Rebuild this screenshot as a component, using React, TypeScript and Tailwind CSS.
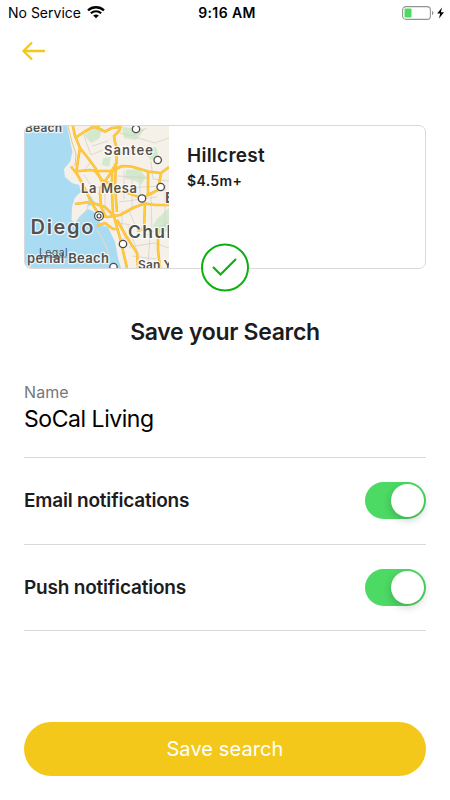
import React, { useState } from "react";

function WifiIcon() {
  return (
    <svg width="18" height="13" viewBox="0 0 18 13" fill="none" stroke="#000">
      <path d="M1 4.4C5.5.2 12.5.2 17 4.4" strokeWidth="2.300" />
      <path d="M3.8 7.3c3-2.7 7.4-2.7 10.4 0" strokeWidth="2.100" />
      <path d="M9 12.2 6.2 9.5c1.6-1.4 4-1.4 5.6 0z" fill="#000" stroke="none" />
    </svg>
  );
}

function BatteryIcon() {
  return (
    <svg width="44" height="14" viewBox="0 0 44 14" fill="none">
      <rect x="0.6" y="0.6" width="27.8" height="12.8" rx="3.4" stroke="#949494" strokeWidth="1.1" />
      <rect x="2.5" y="2.5" width="7" height="9" rx="1" fill="#4cd964" />
      <path d="M30 4.8c2 .8 2 3.6 0 4.4z" fill="#949494" />
      <path d="M40 1.4 35.2 7.6h3L37 12.6l5-6.3h-3.1z" fill="#000" />
    </svg>
  );
}

const roads = [
  "M72.7 125 75 136 80 148 88 158 96 169 101 180 112 193",
  "M75 138 84 132 92 127.500 100 126",
  "M80 148 78 160 76.500 171",
  "M71 166.500 77 174 82 183 86 191 91 202 98 213",
  "M75 171.500 90 170 97 171 112 171 122 166 131.500 166.500 140 169 148 171.500 161 173 169 167",
  "M95 127 105 131.500 112 128 121 127",
  "M121 125 119 131 114 136 115 142 117 149 116.500 163 110 174 101 187 100 195",
  "M95 171 103 181 112 184",
  "M112 171 112 192 113 213 120 238 127 268",
  "M116 163 115 187 117 212",
  "M148 171 148 195 158 190 161 173",
  "M75 204 90 202 105 207 113 215",
  "M99 216 108 217 120 215 135 207 145 203.500 155 205 169 205",
  "M145 203 144 229 137 231",
  "M100 192 101 207 106 217",
  "M97 226 105 223 113 229 118 229",
  "M117 220 126 236 137 253 138 268",
  "M158 229 158 250 160 268",
  "M115 190 128 193 142 198 148 195",
];

const minorRoads =
  "M83 133l8 22 12-5M92 146l16-5M84 175l8 12 12 1M120 133l12 3 15-8M135 137l20 6 14-5M121 153l17-4 11 8M151 161l2 18 16 2M118 176l30 2M124 171v28M132 177v31M140 175v20M118 188l48-2M119 202l38-5M122 210v20M129 211l9 20M119 223l30 5M122 239l27-5 20-12M129 247l25-4 15 5M132 256l24 3M151 195l1 38M165 185v43M88 207l-8 14M105 193v18M128 226l11 30M150 237l-2 27M100 182h13M90 163l-7 9";

const places = [
  { x: 136, y: 129 },
  { x: 157.7, y: 160 },
  { x: 160.7, y: 187 },
  { x: 142, y: 198.5 },
  { x: 123, y: 244 },
  { x: 113.5, y: 267 },
];

const labels = [
  { text: "Beach", x: 25, y: 132, size: 12, width: 37 },
  { text: "Santee", x: 104, y: 154.5, size: 13, width: 49 },
  { text: "La Mesa", x: 81, y: 193, size: 13, width: 56 },
  { text: "Diego", x: 30.5, y: 233.5, size: 20, width: 63 },
  { text: "Chul", x: 128, y: 238, size: 17.5, width: 43 },
  { text: "E", x: 165, y: 203, size: 15, width: 10 },
  { text: "perial Beach", x: 27, y: 263, size: 13, width: 82 },
  { text: "San Y", x: 138, y: 269, size: 12, width: 34 },
];

// Drawn in screen units so the streets and labels share one grid
function MapPreview() {
  return (
    <svg className="h-full w-[144px] shrink-0" viewBox="25 126 144 142">
      <rect x="25" y="126" width="144" height="142" fill="#a9dcf2" />
      <path
        d="M67 126 70 140 72.500 152 70 162 64 169 65 177 72 183 79 185 81 192 75 197 72 207 71.500 220 75 223 80 216 88 209 96 213 101 225 108 227 115 242 118 258 121 268H169V126Z"
        fill="#f5f1e9"
      />
      <path
        d="M84 135l10-7h9l-4 11-8 4zM122 127l23 2-9 11-12-2zM144 149l12-2 3 11-9 2zM126 170l13-1 7 8-4 7-9-4-8-1zM103 158l8-1-2 10-7-2zM169 208l-12 11-4 7 5 7 11-2z"
        fill="#d3e9cd"
      />
      <path d="M72 186l8 5-5 7-5-4zM90 195l5 8-8 4z" fill="#a9dcf2" />
      <path d="M97 230 103 240 108 251 109 260" fill="none" stroke="#d9d8ce" strokeWidth="1.500" />
      <path d={minorRoads} fill="none" stroke="#d8d1cb" strokeWidth="0.8" />
      <g fill="none" strokeLinejoin="round">
        {roads.map((d) => (
          <path key={d} d={d} stroke="#f5b74d" strokeWidth="2.6" />
        ))}
        {roads.map((d) => (
          <path key={d} d={d} stroke="#ffcb36" strokeWidth="1.6" />
        ))}
        <path d="M68 126 72 142 76 154 75 166" stroke="#eac67a" strokeWidth="1" />
      </g>
      {places.map((place) => (
        <circle
          key={place.x}
          cx={place.x}
          cy={place.y}
          r="3.7"
          fill="#fff"
          stroke="#4b4b4b"
          strokeWidth="1.3"
        />
      ))}
      <circle cx="99" cy="216" r="4.400" fill="#fff" stroke="#4b4b4b" strokeWidth="1.200" />
      <circle cx="99" cy="216" r="2" fill="#fff" stroke="#4b4b4b" strokeWidth="1.200" />
      <g className="font-['Inter']">
        {labels.map((label) => (
          <text
            key={label.text}
            x={label.x}
            y={label.y}
            fontSize={label.size}
            fontWeight="600"
            textLength={label.width}
            fill="#55524e"
            stroke="#fff"
            strokeOpacity="0.75"
            strokeWidth="2.400"
            strokeLinejoin="round"
            paintOrder="stroke"
          >
            {label.text}
          </text>
        ))}
        <text x="39" y="255.500" fontSize="10.500" fontWeight="400" textLength="28.500" fill="#3f5966">
          Legal
        </text>
      </g>
      <path d="M39 257H67" stroke="#49697a" strokeWidth="0.800" />
    </svg>
  );
}

function Toggle({ on, onChange }: { on: boolean; onChange: () => void }) {
  return (
    <button
      role="switch"
      aria-checked={on}
      onClick={onChange}
      className={`flex h-[37px] w-[61px] items-center rounded-full px-[2px] ${
        on ? "justify-end bg-[#4cd964]" : "justify-start bg-gray-200"
      }`}
    >
      <span className="h-[33px] w-[33px] rounded-full bg-white shadow-[0_3px_8px_rgba(0,0,0,0.2)]" />
    </button>
  );
}

export default function App() {
  const [settings, setSettings] = useState([
    { title: "Email notifications", on: true },
    { title: "Push notifications", on: true },
  ]);

  const toggle = (index: number) =>
    setSettings(settings.map((s, i) => (i === index ? { ...s, on: !s.on } : s)));

  return (
    <div className="flex h-[800px] w-[450px] flex-col overflow-hidden bg-white font-['Inter',sans-serif] text-[#1c1c1e]">
      {/* Status bar */}
      <div className="grid h-[25px] grid-cols-3 items-center pl-2 pr-[4px] text-[14px] text-black">
        <div className="flex items-center gap-[6px]">
          <span>No Service</span>
          <WifiIcon />
        </div>
        <span className="text-center font-semibold tracking-[0.4px]">9:16 AM</span>
        <div className="flex justify-end">
          <BatteryIcon />
        </div>
      </div>

      {/* Back */}
      <div className="h-[100px] pl-[21px] pt-[16px]">
        <button aria-label="Back" className="block">
          <svg width="25" height="20" viewBox="0 0 25 20" fill="none" stroke="#f4c81a" strokeWidth="2.300">
            <path d="M24 10H2.500M11 1.500 2.500 10l8.500 8.500" />
          </svg>
        </button>
      </div>

      <main className="flex flex-1 flex-col px-6">
        <div className="relative flex h-[144px] w-[402px] rounded-[7px] border border-[#d9d9d9]">
          <div className="flex overflow-hidden rounded-l-[6px]">
            <MapPreview />
          </div>
          <div className="pl-[18px] pt-[18px]">
            <h2 className="text-[19px] font-semibold leading-6 tracking-[0.25px]">Hillcrest</h2>
            <p className="mt-[3px] text-[14px] font-semibold leading-5 tracking-[0.35px]">$4.5m+</p>
          </div>
          <svg className="absolute left-[176px] top-[117px]" width="49" height="49" viewBox="0 0 49 49" fill="none" stroke="#0db10d" strokeWidth="2">
            <circle cx="24" cy="24.500" r="23" fill="#fff" />
            <path d="M12 24l7.500 7.500L35 16" strokeWidth="2.200" />
          </svg>
        </div>

        <h1 className="mt-[47px] text-center text-[23px] font-semibold leading-8 tracking-[-0.3px]">
          Save your Search
        </h1>

        <div className="mt-[33px] h-[77px] border-b border-[#d9d9d9]">
          <p className="text-[16px] leading-[22px] tracking-[0.1px] text-[#777]">Name</p>
          <p className="text-[23px] leading-8 tracking-[-0.45px] text-black">SoCal Living</p>
        </div>

        {settings.map((setting, index) => (
          <div
            key={setting.title}
            className="flex h-[86.500px] w-[402px] items-center justify-between border-b border-[#d9d9d9]"
          >
            <span className="pt-px text-[19px] font-semibold tracking-[-0.2px]">{setting.title}</span>
            <Toggle on={setting.on} onChange={() => toggle(index)} />
          </div>
        ))}

        <button className="mb-6 mt-auto h-[54px] w-[402px] rounded-full bg-[#f4c81a] text-[20px] tracking-[0.1px] text-white">
          Save search
        </button>
      </main>
    </div>
  );
}
